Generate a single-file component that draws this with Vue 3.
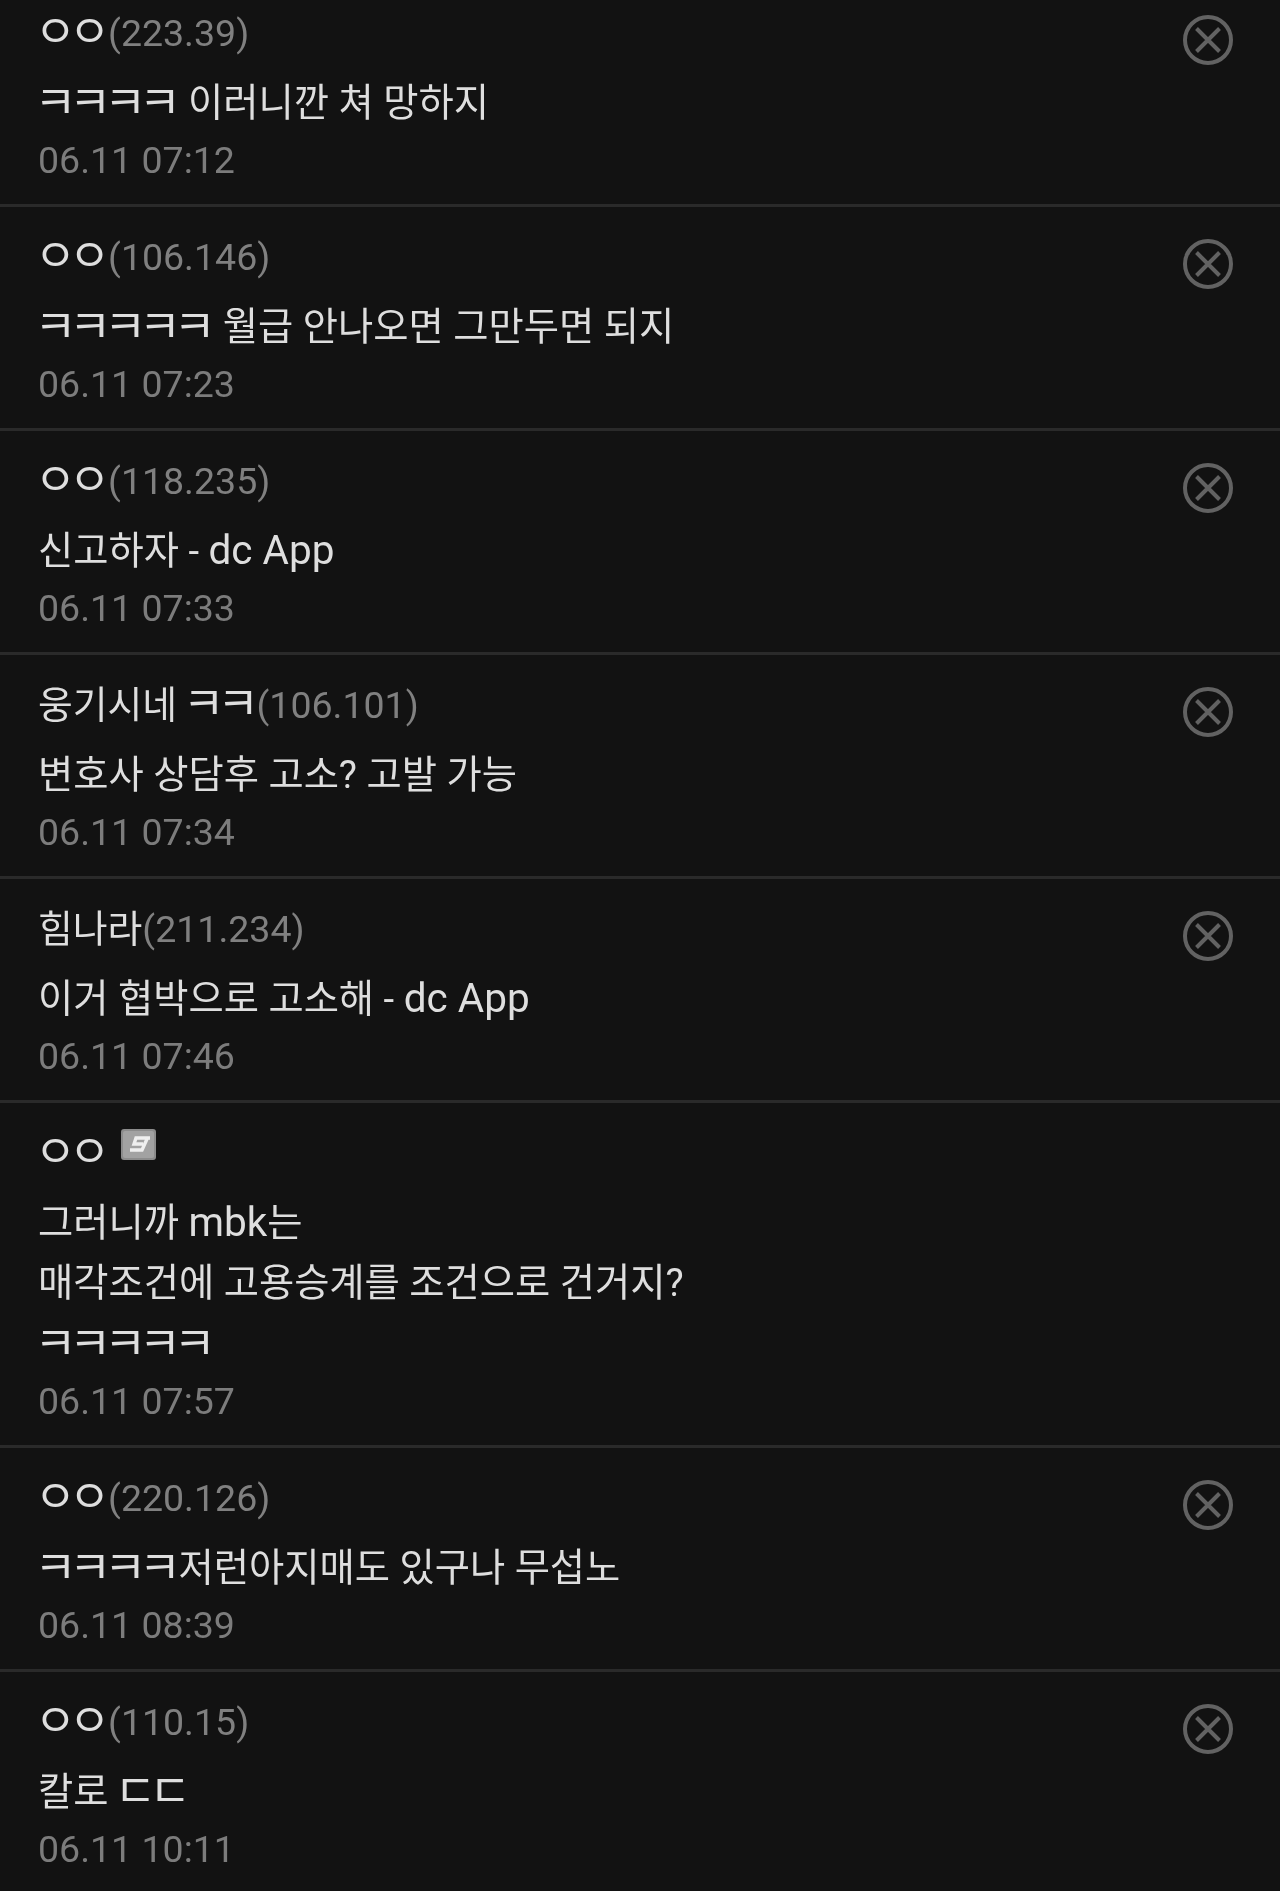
<script setup>
const rows = [
  { name: 'ㅇㅇ', ip: '(223.39)', lines: ['ㅋㅋㅋㅋ 이러니깐 쳐 망하지'], date: '06.11 07:12' },
  { name: 'ㅇㅇ', ip: '(106.146)', lines: ['ㅋㅋㅋㅋㅋ 월급 안나오면 그만두면 되지'], date: '06.11 07:23' },
  { name: 'ㅇㅇ', ip: '(118.235)', lines: ['신고하자 - dc App'], date: '06.11 07:33' },
  { name: '웅기시네 ㅋㅋ', ip: '(106.101)', lines: ['변호사 상담후 고소? 고발 가능'], date: '06.11 07:34' },
  { name: '힘나라', ip: '(211.234)', lines: ['이거 협박으로 고소해 - dc App'], date: '06.11 07:46' },
  { name: 'ㅇㅇ', badge: true, lines: ['그러니까 mbk는', '매각조건에 고용승계를 조건으로 건거지?', 'ㅋㅋㅋㅋㅋ'], date: '06.11 07:57' },
  { name: 'ㅇㅇ', ip: '(220.126)', lines: ['ㅋㅋㅋㅋ저런아지매도 있구나 무섭노'], date: '06.11 08:39' },
  { name: 'ㅇㅇ', ip: '(110.15)', lines: ['칼로 ㄷㄷ'], date: '06.11 10:11' },
]
const parts = (text) =>
  text
    .split(/([ㄱ-ㅎ]+|[A-Za-z][A-Za-z ]*[A-Za-z])/)
    .filter(Boolean)
    .map((t) => ({
      t,
      c: /^[ㄱ-ㅎ]/.test(t) ? 'jamo' : /^[A-Za-z]/.test(t) ? 'lat' : 'kor',
    }))
</script>

<template>
  <div class="page">
    <div class="list">
      <article v-for="(row, i) in rows" :key="i" class="row">
        <div class="head">
          <span class="name"><span v-for="(p, k) in parts(row.name)" :key="k" :class="p.c">{{ p.t }}</span></span>
          <span v-if="row.ip" class="ip">{{ row.ip }}</span>
          <svg v-if="row.badge" class="badge" viewBox="0 0 35 31" width="35" height="31">
            <rect width="35" height="31" rx="3" fill="#8c8c8c" />
            <rect x="2" y="2" width="31" height="27" rx="2" fill="#a2a2a2" />
            <path d="M29 9H15l-2 6h9M26 10l-5 11H9" fill="none" stroke="#efefef" stroke-width="3.4" />
          </svg>
        </div>
        <p v-for="(line, j) in row.lines" :key="j" class="line"><span v-for="(p, k) in parts(line)" :key="k" :class="p.c">{{ p.t }}</span></p>
        <div class="date">{{ row.date }}</div>
        <svg v-if="!row.badge" class="close" viewBox="0 0 50 50" width="50" height="50">
          <circle cx="25" cy="25" r="23" fill="none" stroke="#626262" stroke-width="4" />
          <path d="M13.5 13.5l23 23M36.5 13.5l-23 23" fill="none" stroke="#626262" stroke-width="4" />
        </svg>
      </article>
    </div>
  </div>
</template>

<style>
html, body { background: #121212; }
</style>

<style scoped>
.page {
  height: 1891px;
  overflow: hidden;
  background: #121212;
  font-family: Roboto, "Noto Sans CJK KR", sans-serif;
  filter: blur(0.35px);
}
.list { margin-top: -17px; }
.row {
  position: relative;
  padding: 19.5px 38px 13.6px;
  border-bottom: 3px solid #2a2a2a;
}
.row:last-child { border-bottom: 0; }
.head {
  height: 60px;
  margin-bottom: 10px;
  display: flex;
  align-items: center;
  white-space: nowrap;
}
.name { font-size: 37.8px; line-height: 60px; color: #dedede; }
.ip { font-size: 37.5px; color: #808080; }
.badge { margin-left: 13px; margin-top: -17px; }
.line {
  margin: 0;
  height: 60.5px;
  line-height: 60.5px;
  font-size: 38.3px;
  color: #dedede;
  white-space: nowrap;
}
.line .lat { font-size: 40.5px; line-height: 0; }
.jamo {
  font-size: 1.2em;
  letter-spacing: -0.163em;
  margin-left: -0.08em;
  margin-right: 0.11em;
  vertical-align: -0.065em;
  line-height: 0;
}
.date {
  height: 60px;
  margin-top: -2.6px;
  line-height: 60px;
  font-size: 37.5px;
  color: #7c7c7c;
}
.close {
  position: absolute;
  top: 31.5px;
  right: 47px;
}
</style>
